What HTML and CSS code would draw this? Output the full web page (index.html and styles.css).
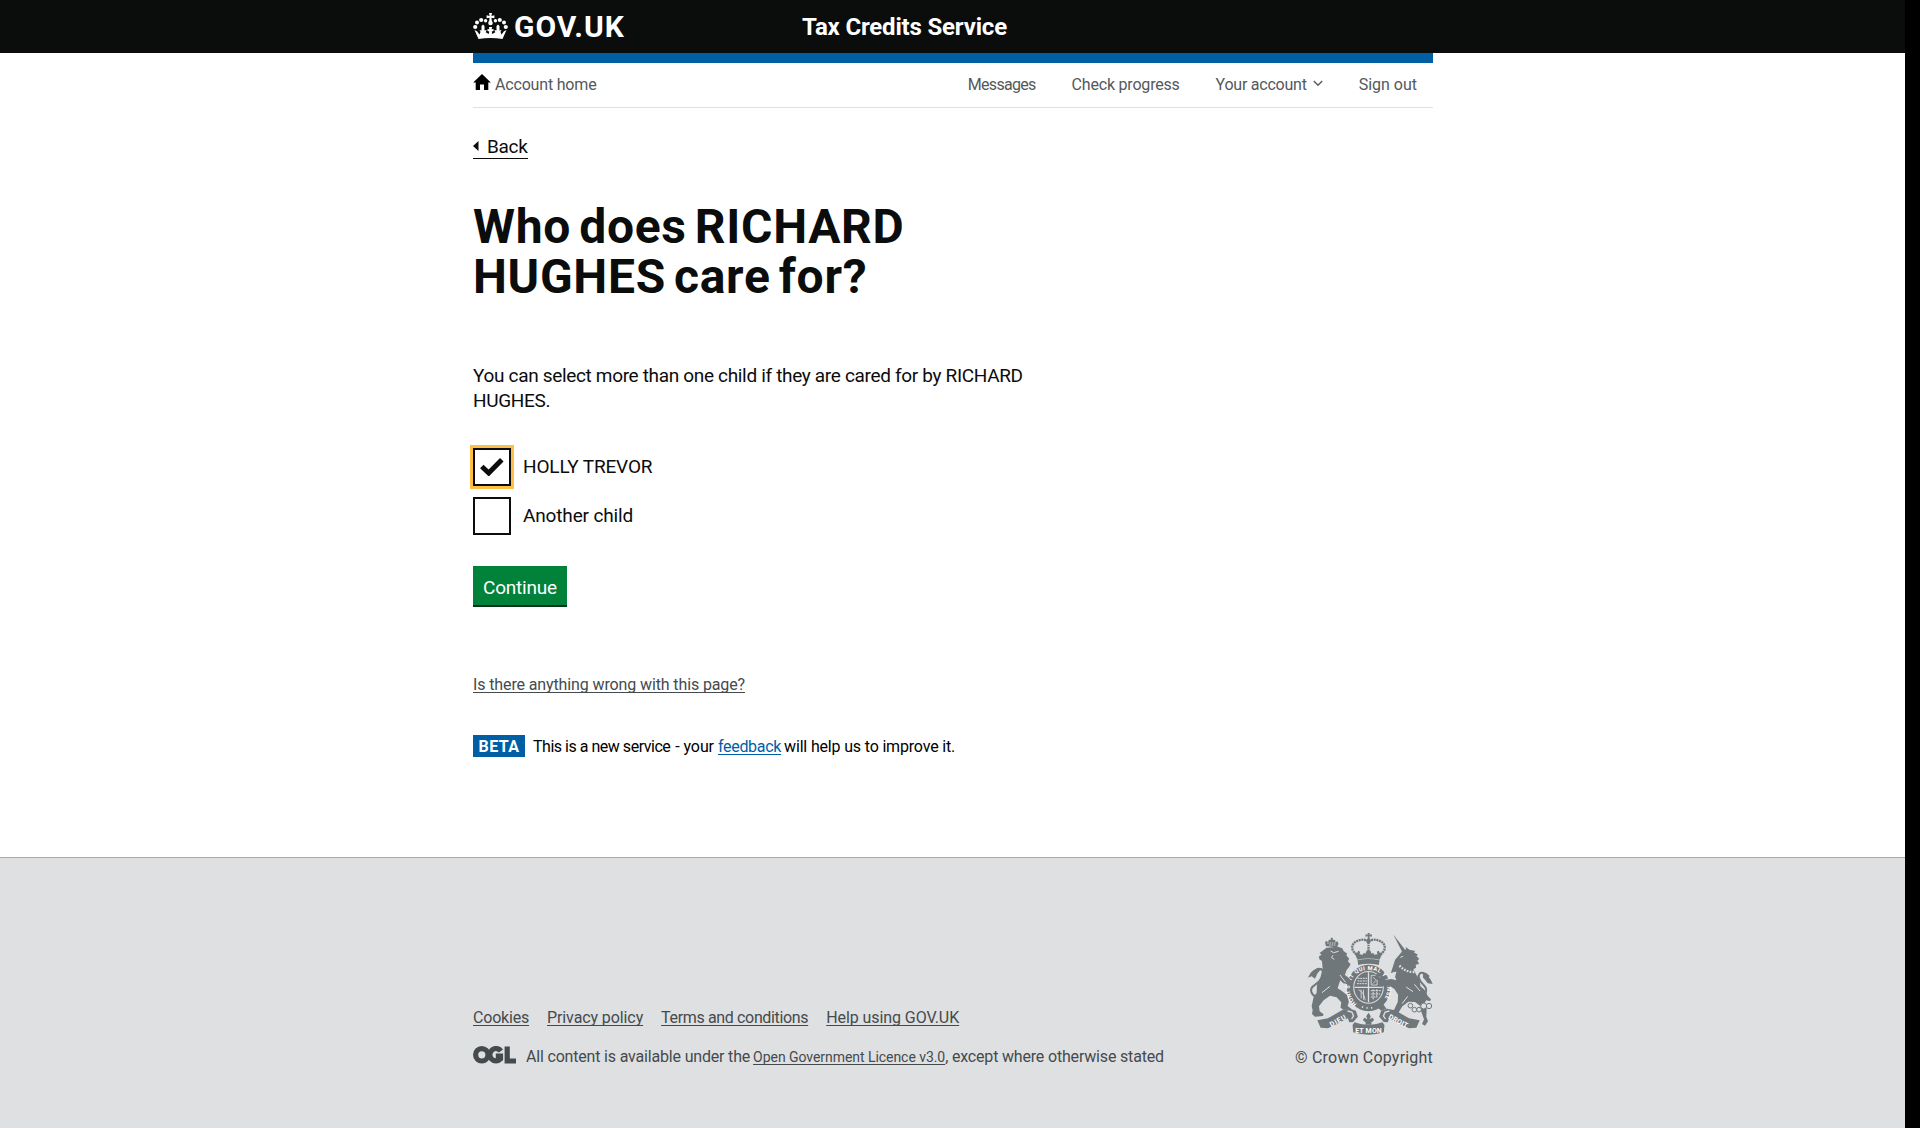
FILE: index.html
```html
<!DOCTYPE html>
<html lang="en">
<head>
<meta charset="utf-8">
<title>Who does RICHARD HUGHES care for? - Tax Credits Service</title>
<link rel="stylesheet" href="styles.css">
</head>
<body>
<div class="page">
  <header class="header">
    <div class="wrap header-inner">
      <a class="logo">
        <svg class="crown" viewBox="0 0 35 28" width="35" height="28" fill="#fff">
          <path d="M16 0h3l-.6 3 3-.7v3l-3-.6.6 4h-3l.6-4-3 .6v-3l3 .7z"/>
          <circle cx="17.5" cy="10" r="2.3"/>
          <circle cx="12.6" cy="7.8" r="1.7"/><circle cx="8.2" cy="7" r="2.1"/><circle cx="4" cy="9.6" r="2"/><circle cx="2.2" cy="14" r="2.1"/>
          <circle cx="22.4" cy="7.8" r="1.7"/><circle cx="26.8" cy="7" r="2.1"/><circle cx="31" cy="9.6" r="2"/><circle cx="32.8" cy="14" r="2.1"/>
          <path d="M1.500 17l2.500 1.200 2.500 3.400 1-2.600-1-2 2 .5V13l1.500-1.500L11.500 13v4.500l2.200-.5-1 2.300 3 1.700.6-2.600-1.800-.4v-2l1.800.3-.3-2.300h3l-.3 2.300 1.800-.3v2l-1.800.4.6 2.600 3-1.700-1-2.300 2.200.5V13l1.500-1.500 1.500 1.500v4.500l2-.5-1 2 1 2.600 2.500-3.400 2.500-1.200L29.500 26q-12-1.800-24 0z"/>
        </svg>
        <span class="logo-text">GOV.UK</span>
      </a>
      <span class="service">Tax Credits Service</span>
    </div>
  </header>

  <main class="wrap main">
    <nav class="nav">
      <a class="home">
        <svg width="18" height="16" viewBox="0 0 18 16"><path d="M9 0l8.800 8.500h-2.500V16H11v-5.500H7V16H2.700V8.500H.2z"/></svg>
        <span class="n-home">Account home</span>
      </a>
      <div class="nav-links">
        <a class="n-msg">Messages</a>
        <a class="n-check">Check progress</a>
        <a class="n-acct">Your account<svg class="chev" width="10" height="7" viewBox="0 0 10 7"><path d="M.8 1L5 5.300 9.200 1" fill="none" stroke="#5a5e61" stroke-width="1.500"/></svg></a>
        <a class="n-out">Sign out</a>
      </div>
    </nav>

    <a class="back"><svg width="6" height="10" viewBox="0 0 6 10"><path d="M0 5l5.500-5v10z" fill="#0b0c0c"/></svg>Back</a>

    <h1>Who does RICHARD<br>HUGHES care for?</h1>

    <p class="hint">You can select more than one child if they are cared for by RICHARD<br>HUGHES.</p>

    <div class="choices">
      <label class="choice"><span class="box focused"><svg width="24" height="19" viewBox="0 0 24 19"><path d="M1.800 9.500L8.700 16 21.800 2.800" fill="none" stroke="#0b0c0c" stroke-width="5"/></svg></span>HOLLY TREVOR</label>
      <label class="choice"><span class="box"></span>Another child</label>
    </div>

    <button class="button" type="button">Continue</button>

    <a class="report">Is there anything wrong with this page?</a>

    <div class="phase">
      <strong class="tag">BETA</strong>
      <span class="p-a">This is a new service</span><span class="p-b">- your</span><a class="p-c">feedback</a><span class="p-d">will help us to improve it.</span>
    </div>
  </main>

  <footer class="footer">
    <div class="wrap footer-inner">
      <div class="meta">
        <div class="links">
          <a class="f-cook">Cookies</a><a class="f-priv">Privacy policy</a><a class="f-terms">Terms and conditions</a><a class="f-help">Help using GOV.UK</a>
        </div>
        <div class="licence">
          <svg class="ogl" width="43" height="18" viewBox="0 0 43 18" fill="none" stroke="#454a4d" stroke-width="5.200">
            <circle cx="8.800" cy="8.800" r="6.200"/><path d="M28 5A6.200 6.200 0 1 0 27.500 13V10H22.800"/><path d="M34.200.5V15H43"/>
          </svg>
          <span class="l-a">All content is available under the</span><a class="l-b">Open Government Licence v3.0</a><span class="l-c">, except where otherwise stated</span>
        </div>
      </div>
      <div class="copyright">
        <svg class="arms" width="125" height="102" viewBox="24 24 376 306" preserveAspectRatio="none" fill="#6f777b">
          <!-- royal crown -->
          <path d="M203 23h7l-1 6 7-1v7l-7-1 1 9h-7l1-9-7 1v-7l7 1z"/>
          <path d="M206 48C188 38 156 48 157 68c0 9 7 15 12 20M206 48c18-10 50 0 49 20 0 9-7 15-12 20" fill="none" stroke="#6f777b" stroke-width="7" stroke-dasharray="6 2"/>
          <path d="M206 45v34" stroke="#6f777b" stroke-width="7" stroke-dasharray="5 2"/>
          <circle cx="206" cy="48" r="7"/>
          <path d="M163 82l9 2 3-7 6 3-2 8 10 1 3-6 5 3 3-9h12l3 9 5-3 3 6 10-1-2-8 6-3 3 7 9-2-10 22q-33-7-66 0z"/>
          <path d="M173 106q33-8 66 0l-2 14q-31-8-62 0z"/>
          <!-- garter and shield -->
          <ellipse cx="206" cy="189" rx="65" ry="70"/>
          <ellipse cx="206" cy="187" rx="46" ry="49" fill="#dee0e2"/>
          <ellipse cx="206" cy="187" rx="43" ry="46"/>
          <path d="M206 142v90M164 187h84" stroke="#dee0e2" stroke-width="4"/>
          <path d="M173 160h29M173 168h29M171 176h31M213 197h30M213 207h28M213 216h20M220 193v32M231 193v24" stroke="#dee0e2" stroke-width="3" stroke-dasharray="6 2"/>
          <path d="M214 151h18v29h-18zM219 156l10 10-10 10M176 194q18 10 20 32M184 194v26M191 194v30" fill="none" stroke="#dee0e2" stroke-width="2.500"/>
          <path id="garter" d="M171 237C134 207 143 135 206 135C270 135 276 207 241 238" fill="none"/>
          <text class="motto" fill="#fff"><textPath href="#garter" textLength="262">HONI SOIT QUI MAL Y PENSE</textPath></text>
          <path d="M186 245q20 8 40 0" fill="none" stroke="#dee0e2" stroke-width="5" stroke-dasharray="4 10"/>
          <path d="M228 243l16 14 16-6-13-18z"/>
          <!-- lion -->
          <path d="M78 64l-3-13 6-3 3 4 3-8 5 1 1-7h5l1 7 6-1 2 7 5-2 4 7-6 13q-17-6-32-5z"/>
          <path d="M82 54h25M88 60h20" stroke="#dee0e2" stroke-width="3" stroke-dasharray="4 3"/>
          <path d="M80 68l34-3 13 5 4 8 11 8-3 5 9 10-4 8 8 9-5 9-7 8-5 15 12 9 8 10 2 9-10 4-6-5-11-2-9-9-8 24 12 7 16 13 6 20-4 13 12 9-24 3-9-7 2-16-14-15-20-5-19 14-14 18 2 15 12 9-2 5-24 2-9-8 2-12-3-11 6-28 9-13 1-24 11-24 6-25-2-22-8-5-1-9 8-5-6-5z"/>
          <path d="M92 78l9 5 15-4M99 91l-4 7 8 5M66 203l24-19M120 150l17 22M93 228l-14 26" fill="none" stroke="#dee0e2" stroke-width="3"/>
          <path d="M62 219C28 214 28 190 43 181C61 168 78 150 68 137C60 127 49 131 43 143" fill="none" stroke="#6f777b" stroke-width="6"/>
          <path d="M24 158q9-21 27-28l16-1-14 15-8 17-10-7z"/>
          <!-- unicorn -->
          <path d="M281 29l34 44-8 7z"/>
          <path d="M286 104l17-20 9-11 7 1-1-8 11 8 18 4-5 4 13 7-5 4 9 9-6 4 5 11-10 2 1 9-8 5 9 17 10 15 2 18 15 14 7 16 10 10-3 6-11-3-7 10 8 15-1 25 5 13-9 13-9-5 6-14-9-25-1-14-17-13-20-1-18 14-16 25-17 7-8-7 16-15 11-23 1-22-11-17-15-10-17 2-15-2-2-8 9-2-16-10-1-13 13-6 5 8-7 4 18 9 19-2 15 4-4-10 4-16-8 1-9 4z"/>
          <path d="M299 122q19 20 45 19" fill="none" stroke="#dee0e2" stroke-width="7" stroke-dasharray="5 4"/>
          <path d="M302 97l8-3M319 186l21 14M344 178l17 20M324 214l-17 22" fill="none" stroke="#dee0e2" stroke-width="3"/>
          <path d="M348 220C382 211 388 195 369 177C344 150 362 130 388 155" fill="none" stroke="#6f777b" stroke-width="6"/>
          <path d="M370 141q18 8 29 36l-15-2-14-18z"/>
          <g fill="#dee0e2" stroke="#6f777b" stroke-width="3"><circle cx="332" cy="242" r="7"/><circle cx="344" cy="254" r="7"/><circle cx="358" cy="254" r="7"/><circle cx="372" cy="243" r="9"/><circle cx="388" cy="243" r="8"/></g>
          <!-- ribbon -->
          <g id="banner">
            <path d="M52 286l32-6 42-24 24-5 18 6 6 18-14 16-12 1-4-12-34 18-26 12-22-2z"/>
            <path d="M143 258l13 3 5 12-6 9" fill="none" stroke="#dee0e2" stroke-width="4"/>
          </g>
          <path d="M360 286l-32-6-42-24-24-5-18 6-6 18 14 16 12 1 4-12 34 18 26 12 22-2z"/>
          <path d="M269 258l-13 3-5 12 6 9" fill="none" stroke="#dee0e2" stroke-width="4"/>
          <path d="M158 300l6-8q42 16 84 0l6 8-2 22q-46 14-92 0z"/>
          <path d="M206 263l7 11-4 9 9-5 5 7-9 8 2 6h-20l2-6-9-8 5-7 9 5-4-9z"/>
          <g class="ribbon" fill="#fff"><text transform="translate(94 306) rotate(-28)" textLength="52">DIEU</text><text x="166" y="324" textLength="80">ET MON</text><text transform="translate(265 280) rotate(28)" textLength="62">DROIT</text></g>
        </svg>
        <span class="c-text">© Crown Copyright</span>
      </div>
    </div>
  </footer>
</div>
</body>
</html>
```

FILE: styles.css
```css
* { box-sizing: border-box; }
body {
  margin: 0;
  background: #000;
  color: #0b0c0c;
  font-family: Roboto, "Liberation Sans", sans-serif;
  font-size: 16px;
  line-height: 20px;
}
svg { display: block; flex: none; }
.page { width: 1905px; height: 1128px; background: #fff; display: flex; flex-direction: column; }
.wrap { width: 960px; margin-left: 473px; }

.header { background: #0b0c0c; height: 53px; color: #fff; font-weight: 700; line-height: 53px; }
.header-inner { display: flex; }
.logo { display: flex; width: 329px; gap: 6px; }
.crown { margin-top: 13px; }
.logo-text { font-size: 30px; letter-spacing: 1px; }
.service { font-size: 24px; letter-spacing: -0.18px; line-height: 55px; height: 53px; }

.main { height: 804px; border-top: 10px solid #005ea5; display: flex; flex-direction: column; align-items: flex-start; }
.nav { width: 100%; height: 45px; border-bottom: 1px solid #dee0e2; display: flex; justify-content: space-between; line-height: 44px; color: #54585b; }
.home { display: flex; gap: 4px; }
.home svg { margin-top: 11px; fill: #000; }
.n-home { letter-spacing: -0.18px; }
.nav-links { display: flex; gap: 36px; padding-right: 16px; }
.n-msg { letter-spacing: -0.7px; }
.n-check { letter-spacing: -0.2px; }
.n-acct { letter-spacing: -0.24px; display: flex; gap: 6px; }
.chev { margin-top: 17px; }
.n-out { letter-spacing: 0; }

.back { display: flex; align-items: center; gap: 8px; margin-top: 26px; height: 25px; border-bottom: 1px solid #0b0c0c; font-size: 19px; line-height: 25px; letter-spacing: -0.3px; }

h1 { margin: 43px 0 0; font-size: 48px; font-weight: 700; line-height: 50px; letter-spacing: 0.7px; word-spacing: -4.5px; }
.hint { margin: 61px 0 0; font-size: 19px; line-height: 25px; letter-spacing: -0.33px; }

.choices { margin-top: 35px; display: flex; flex-direction: column; gap: 11px; }
.choice { display: flex; gap: 12px; font-size: 19px; line-height: 38px; letter-spacing: -0.15px; }
.box { width: 38px; height: 38px; border: 2px solid #0b0c0c; display: flex; align-items: center; justify-content: center; padding-bottom: 1px; }
.focused { box-shadow: 0 0 0 3px #ffbf47; }

.button { margin: 31px 0 0; width: 94px; height: 41px; padding: 5px 0 0; border: 0; border-bottom: 2px solid #003618; background: #00823b; color: #fff; font: 19px/34px Roboto, sans-serif; letter-spacing: -0.2px; }

.report, .p-c, .links a, .l-b { text-decoration: underline 1px; text-underline-offset: 2px; text-decoration-skip-ink: none; }
.report { margin-top: 68px; color: #454a4d; letter-spacing: -0.12px; }

.phase { margin-top: 40px; height: 22px; display: flex; line-height: 24px; color: #000; }
.tag { width: 52px; background: #005ea5; color: #fff; text-align: center; letter-spacing: 0.4px; margin-right: 8px; }
.p-a { letter-spacing: -0.48px; margin-right: 5px; }
.p-b { letter-spacing: -0.1px; margin-right: 4px; }
.p-c { letter-spacing: -0.3px; margin-right: 3px; color: #005ea5; }
.p-d { letter-spacing: -0.17px; }

.footer { height: 271px; border-top: 1px solid #a1acb2; background: #dee0e2; color: #454a4d; }
.footer-inner { display: flex; justify-content: space-between; }
.meta { padding-top: 150px; }
.links { display: flex; gap: 18px; }
.f-cook { letter-spacing: -0.2px; }
.f-priv { letter-spacing: -0.1px; }
.f-terms { letter-spacing: -0.35px; }
.f-help { letter-spacing: -0.08px; }
.licence { display: flex; margin-top: 19px; }
.ogl { margin: -1px 10px 0 0; }
.l-a { letter-spacing: -0.18px; margin-right: 3px; }
.l-b { font-size: 14px; letter-spacing: -0.05px; }
.l-c { letter-spacing: -0.18px; }
.copyright { padding-top: 75px; display: flex; flex-direction: column; align-items: flex-end; }
.arms { margin-bottom: 13px; }
.c-text { letter-spacing: 0.2px; }
.motto { font: 700 17px Roboto, sans-serif; }
.ribbon { font: 700 21px Roboto, sans-serif; }
```
